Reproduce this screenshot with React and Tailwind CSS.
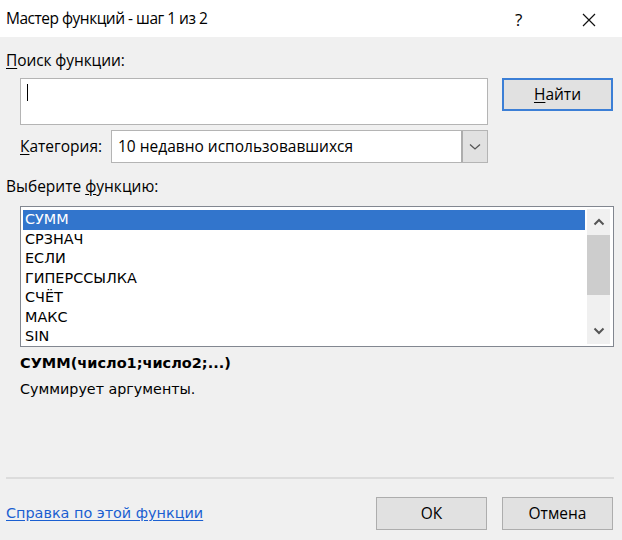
import React from "react";

const ui = { fontFamily: '"Open Sans", "Noto Sans", sans-serif' };
const tah = { fontFamily: '"DejaVu Sans", "Noto Sans", sans-serif' };

export default function App() {
  const items = ["СУММ", "СРЗНАЧ", "ЕСЛИ", "ГИПЕРССЫЛКА", "СЧЁТ", "МАКС", "SIN"];
  return (
    <div className="w-[622px] h-[540px] bg-[#f0f0f0] flex flex-col text-[#000] overflow-hidden" style={ui}>
      <div className="h-[37px] bg-white flex items-center pl-[6px] relative">
        <span className="text-[15.5px] tracking-[-0.5px]">Мастер функций - шаг 1 из 2</span>
        <span className="absolute left-[515px] top-[7px] text-[17px]">?</span>
        <svg className="absolute left-[582px] top-[13px]" width="14" height="14" viewBox="0 0 14 14">
          <path d="M1 1L13 13M13 1L1 13" stroke="#111" strokeWidth="1.2" />
        </svg>
      </div>

      <div className="pl-[6px] mt-[13px] h-[20px] text-[15.5px] leading-[20px] tracking-[-0.1px]">
        <span className="underline underline-offset-2">П</span>оиск функции:
      </div>

      <div className="flex mt-[8px] h-[47px]">
        <div className="ml-[20px] w-[468px] h-[47px] bg-white border border-[#b4b4b4] pl-[6px] pt-[5px]">
          <div className="w-[1px] h-[17px] bg-black" />
        </div>
        <div className="ml-[14px] w-[111px] h-[33px] border-2 border-[#3c7fd6] bg-[#e1e1e1] flex items-center justify-center text-[15.5px]">
          <span><span className="underline underline-offset-2">Н</span>айти</span>
        </div>
      </div>

      <div className="flex items-center mt-[5px] h-[33px]">
        <div className="ml-[20px] w-[91px] text-[15.5px]">
          <span className="underline underline-offset-2">К</span>атегория:
        </div>
        <div className="w-[377px] h-[33px] bg-white border border-[#b4b4b4] flex items-center">
          <span className="flex-1 pl-[6px] text-[15.5px]">10 недавно использовавшихся</span>
          <div className="w-[26px] h-[31px] bg-[#e1e1e1] border-l-2 border-[#adadad] flex items-center justify-center">
            <svg width="12" height="8" viewBox="0 0 12 8">
              <path d="M1 1.5L6 6L11 1.5" stroke="#555" strokeWidth="1.3" fill="none" />
            </svg>
          </div>
        </div>
      </div>

      <div className="pl-[6px] mt-[13px] h-[20px] text-[15.5px] leading-[20px]">
        Выберите <span className="underline underline-offset-2">ф</span>ункцию:
      </div>

      <div className="ml-[20px] mt-[10px] w-[594px] h-[141px] bg-white border border-[#828790] flex p-[2px] pr-[3px]">
        <div className="flex-1 flex flex-col pt-[1px]" style={tah}>
          {items.map((t, i) => (
            <div
              key={t}
              className={
                "h-[19.5px] leading-[19.5px] pl-[2px] text-[14.4px] " +
                (i === 0 ? "bg-[#3275cc] text-white" : "text-black")
              }
            >
              {t}
            </div>
          ))}
        </div>
        <div className="w-[23px] ml-[2px] bg-[#f0f0f0] flex flex-col items-center">
          <div className="h-[26px] flex items-center justify-center">
            <svg width="12" height="8" viewBox="0 0 12 8">
              <path d="M1.5 6.5L6 2L10.5 6.5" stroke="#555" strokeWidth="2" fill="none" />
            </svg>
          </div>
          <div className="w-[23px] h-[60px] bg-[#cdcdcd]" />
          <div className="flex-1" />
          <div className="h-[26px] flex items-center justify-center">
            <svg width="12" height="8" viewBox="0 0 12 8">
              <path d="M1.5 1.5L6 6L10.5 1.5" stroke="#555" strokeWidth="2" fill="none" />
            </svg>
          </div>
        </div>
      </div>

      <div className="pl-[20px] mt-[6px] h-[20px] leading-[20px] text-[14.5px] font-bold" style={tah}>
        СУММ(число1;число2;...)
      </div>
      <div className="pl-[20px] mt-[6px] h-[20px] leading-[20px] text-[14.3px]" style={tah}>
        Суммирует аргументы.
      </div>

      <div className="flex-1" />

      <div className="ml-[6px] w-[608px] h-[2px] bg-[#dcdcdc]" />

      <div className="flex items-center mt-[18px] h-[33px] pl-[6px]">
        <span className="text-[14.4px] text-[#1a5fd1] underline underline-offset-2" style={tah}>
          Справка по этой функции
        </span>
        <div className="flex-1" />
        <div className="w-[111px] h-[33px] border border-[#adadad] bg-[#e1e1e1] flex items-center justify-center text-[15.5px]">
          ОК
        </div>
        <div className="ml-[15px] mr-[9px] w-[111px] h-[33px] border border-[#adadad] bg-[#e1e1e1] flex items-center justify-center text-[15.5px]">
          Отмена
        </div>
      </div>
      <div className="h-[10px]" />
    </div>
  );
}
